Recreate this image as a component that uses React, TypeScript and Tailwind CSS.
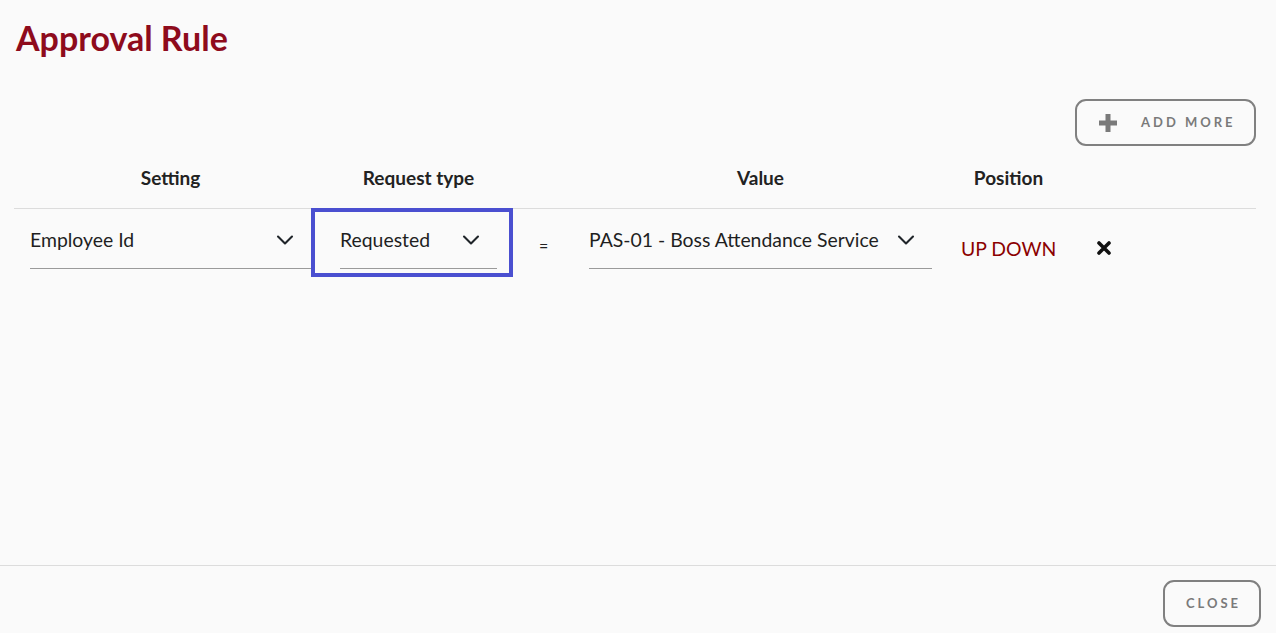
import { ReactNode } from "react";

const font = { fontFamily: "Lato, 'Open Sans', sans-serif" };

function Chevron() {
  return (
    <svg width="18" height="12" viewBox="0 0 18 12" fill="none">
      <path d="M2 2.5 L9 9.5 L16 2.5" stroke="#1f2429" strokeWidth="2.1" strokeLinecap="round" strokeLinejoin="round" />
    </svg>
  );
}

function Select({ value, className }: { value: string; className?: string }) {
  return (
    <div className={`flex items-center justify-between border-b border-[#9a9a9a] ${className ?? ""}`}>
      <span className="text-[19.4px] text-[#1f1f1f] leading-none">{value}</span>
      <Chevron />
    </div>
  );
}

function Th({ children, className }: { children: ReactNode; className?: string }) {
  return (
    <div className={`text-[19px] font-bold text-[#222] text-center ${className ?? ""}`}>{children}</div>
  );
}

export default function App() {
  return (
    <div className="w-[1276px] h-[633px] bg-[#fafafa] flex flex-col overflow-hidden" style={font}>
      <div className="flex-1 px-[14px]">
        <h1 className="text-[34px] font-bold text-[#8e0b1c] leading-none pt-[21px] pl-[2px]">Approval Rule</h1>

        <div className="flex justify-end mt-[44px] pr-[6px]">
          <button className="flex items-center w-[181px] h-[47px] border-2 border-[#808080] rounded-[11px] pl-[21px]">
            <svg width="20" height="20" viewBox="0 0 20 20">
              <path d="M10 1 V19 M1 10 H19" stroke="#7a7a7a" strokeWidth="5" />
            </svg>
            <span className="ml-[23px] text-[13px] font-bold tracking-[3px] text-[#7a7a7a]">ADD MORE</span>
          </button>
        </div>

        <div className="flex items-center h-[63px] pt-[3px] border-b border-[#dcdcdc] mr-[6px]">
          <Th className="w-[297px] pl-[16px]">Setting</Th>
          <Th className="w-[202px] pl-[29px] pr-[16px]">Request type</Th>
          <div className="w-[76px]" />
          <Th className="w-[343px]">Value</Th>
          <Th className="w-[153px] px-[29px]">Position</Th>
        </div>

        <div className="flex items-start">
          <div className="w-[297px] pl-[16px]">
            <Select value="Employee Id" className="h-[60px] pt-[2px] pr-[20px] mr-[-3px]" />
          </div>
          <div className="w-[202px] h-[69px] border-[4px] border-[#4a4fd0] mt-[-1px] px-[25px]">
            <Select value="Requested" className="h-[57px] pr-[17px] mr-[-13px]" />
          </div>
          <div className="w-[76px] pl-[26px] pt-[29px] text-[16px] text-[#222] leading-none">=</div>
          <Select value="PAS-01 - Boss Attendance Service" className="w-[343px] h-[60px] pt-[2px] pr-[17px]" />
          <div className="pl-[29px] pt-[30px] text-[19.4px] leading-none text-[#8b0000]">UP DOWN</div>
          <div className="pl-[41px] pt-[32px]">
            <svg width="14" height="14" viewBox="0 0 14 14">
              <path d="M2 2 L12 12 M12 2 L2 12" stroke="#111" strokeWidth="3.6" strokeLinecap="round" />
            </svg>
          </div>
        </div>
      </div>

      <div className="border-t border-[#dcdcdc] h-[68px] flex items-start justify-end pt-[14px] pr-[15px]">
        <button className="w-[98px] h-[47px] border-2 border-[#808080] rounded-[11px] text-[13px] font-bold tracking-[3px] text-[#7a7a7a] pl-[3px]">
          CLOSE
        </button>
      </div>
    </div>
  );
}
